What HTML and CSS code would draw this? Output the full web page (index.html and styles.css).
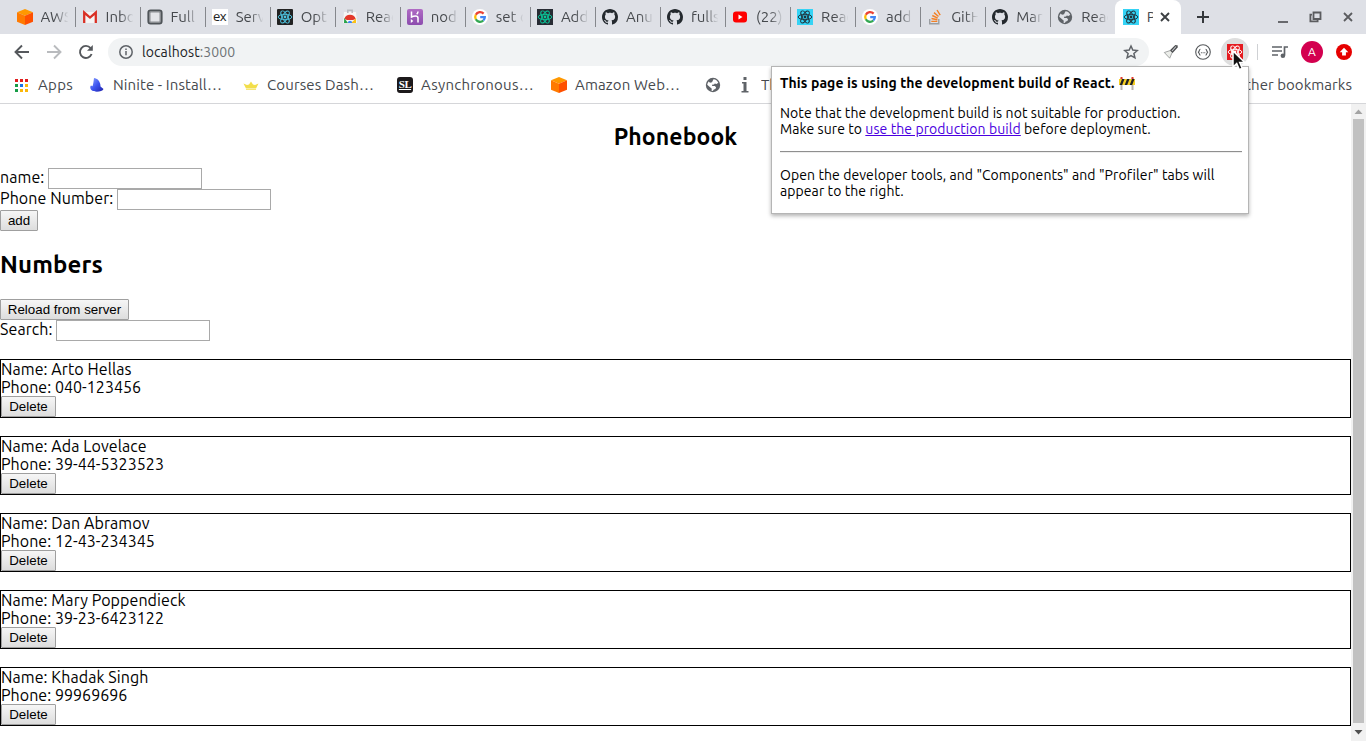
FILE: index.html
```
<!DOCTYPE html>
<html lang="en">
<head>
<meta charset="utf-8">
<title>Phonebook</title>
<link rel="stylesheet" href="styles.css">
</head>
<body>
<svg class="defs" width="0" height="0" aria-hidden="true">
  <defs>
    <linearGradient id="ninite" x1="0" y1="0" x2="1" y2="1"><stop offset="0" stop-color="#8fa5ff"/><stop offset=".5" stop-color="#3d55f0"/><stop offset="1" stop-color="#2020a8"/></linearGradient>
    <linearGradient id="heroku" x1="0" y1="0" x2="0" y2="1"><stop offset="0" stop-color="#b06bc4"/><stop offset="1" stop-color="#8c4cae"/></linearGradient>
    <symbol id="box" viewBox="0 0 16 16"><path fill="#ff9800" d="M8 0l8 3.2L8 6.8 0 3.2z"/><path fill="#ff7a00" d="M0 3.2l8 3.6V16l-8-3.2z"/><path fill="#ff5000" d="M16 3.2L8 6.8V16l8-3.2z"/></symbol>
    <symbol id="atom" viewBox="0 0 16 16"><g fill="none" stroke="currentColor" stroke-width=".95"><ellipse cx="8" cy="8" rx="6.8" ry="2.7"/><ellipse cx="8" cy="8" rx="6.8" ry="2.7" transform="rotate(60 8 8)"/><ellipse cx="8" cy="8" rx="6.8" ry="2.7" transform="rotate(120 8 8)"/></g><circle cx="8" cy="8" r="1.4" fill="currentColor"/></symbol>
    <symbol id="github" viewBox="0 0 16 16"><path fill="#24292e" d="M8 0C3.58 0 0 3.58 0 8c0 3.54 2.29 6.53 5.47 7.59.4.07.55-.17.55-.38 0-.19-.01-.82-.01-1.49-2.01.37-2.53-.49-2.69-.94-.09-.23-.48-.94-.82-1.13-.28-.15-.68-.52-.01-.53.63-.01 1.08.58 1.23.82.72 1.21 1.87.87 2.33.66.07-.52.28-.87.51-1.07-1.78-.2-3.64-.89-3.64-3.95 0-.87.31-1.59.82-2.15-.08-.2-.36-1.02.08-2.12 0 0 .67-.21 2.2.82.64-.18 1.32-.27 2-.27s1.36.09 2 .27c1.53-1.04 2.2-.82 2.2-.82.44 1.1.16 1.92.08 2.12.51.56.82 1.27.82 2.15 0 3.07-1.87 3.75-3.65 3.95.29.25.54.73.54 1.48 0 1.07-.01 1.93-.01 2.2 0 .21.15.46.55.38A8.01 8.01 0 0016 8c0-4.42-3.58-8-8-8z"/></symbol>
    <symbol id="google" viewBox="0 0 16 16"><circle cx="8" cy="8" r="8" fill="#fff"/><g fill="none" stroke-width="2.3"><path stroke="#ea4335" d="M11.6 4.6A4.8 4.8 0 0 0 3.8 5.7"/><path stroke="#fbbc05" d="M3.8 5.7a4.8 4.8 0 0 0 0 4.6"/><path stroke="#34a853" d="M3.8 10.3a4.8 4.8 0 0 0 7.5 1.2"/><path stroke="#4285f4" d="M11.3 11.5A4.8 4.8 0 0 0 12.8 8.2H8.2"/></g></symbol>
    <symbol id="globe" viewBox="0 0 16 16"><circle cx="8" cy="8" r="7.2" fill="#5f6368"/><path fill="currentColor" d="M8.500 2.300c2.200.2 4 1.600 4.800 3.500L11.500 7 9.800 6.500 9 7.500l-2 .2.200 1.200 2.600.1 1.300 1.300-.7 1.700-1.600.5-1 1.400-1.300-.2.300-2L4.800 10 2.200 7.800c.2-1.200.7-2.300 1.500-3.200L5 5.800l2-.5z"/></symbol>
  </defs>
</svg>

<header class="browser">
  <div class="tabstrip">
    <div class="tab"><svg class="fav"><use href="#box"/></svg><span class="tab-title">AWS</span></div>
    <div class="tab"><svg class="fav" viewBox="0 0 16 16"><path fill="#f4f4f4" d="M1 3h14v11H1z"/><path fill="none" stroke="#d93025" stroke-width="2.300" d="M2.200 14V3.600L8 8.600l5.800-5V14"/></svg><span class="tab-title">Inbox</span></div>
    <div class="tab"><svg class="fav" viewBox="0 0 16 16"><rect x="1.200" y="1.200" width="13.600" height="13.600" rx="2.500" fill="#8b8e92" stroke="#4f5458" stroke-width="1.600"/><rect x="3.500" y="3.500" width="9" height="9" rx=".5" fill="#e3e4e8"/></svg><span class="tab-title">Full</span></div>
    <div class="tab"><span class="fav fav-ex">ex</span><span class="tab-title">Serv</span></div>
    <div class="tab"><svg class="fav fav-dark"><use href="#atom"/></svg><span class="tab-title">Opti</span></div>
    <div class="tab"><svg class="fav" viewBox="0 0 16 16"><path fill="#f6f6f6" d="M2 3h12l1 11H1z"/><path fill="none" stroke="#b8bbc0" stroke-width="1.500" d="M5.800 4V1.200h4.400V4"/><path fill="#e3392b" d="M2.300 10A6 6 0 0 1 13.700 10L11 11H5z"/><path fill="#28a34a" d="M2.200 9l3.800 5H2z"/><path fill="#fbc116" d="M14 9.500V14H9z"/><path fill="#4285f4" d="M5.800 14a2.200 2.200 0 0 1 4.400 0z"/></svg><span class="tab-title">Reac</span></div>
    <div class="tab"><svg class="fav" viewBox="0 0 16 16"><rect width="16" height="16" rx="2" fill="url(#heroku)"/><path fill="none" stroke="#fff" stroke-width="1.500" d="M4.500 2.500V8c2-1 6.500-2 6.500 1v4.500M11 2.500c0 1.200-.5 2-1.300 2.800"/><path fill="#fff" d="M3.800 10l2.500 2-2.500 2z"/></svg><span class="tab-title">node</span></div>
    <div class="tab"><svg class="fav"><use href="#google"/></svg><span class="tab-title">set c</span></div>
    <div class="tab"><svg class="fav fav-green"><use href="#atom"/></svg><span class="tab-title">Add</span></div>
    <div class="tab"><svg class="fav"><use href="#github"/></svg><span class="tab-title">Anur</span></div>
    <div class="tab"><svg class="fav"><use href="#github"/></svg><span class="tab-title">fulls</span></div>
    <div class="tab"><svg class="fav" viewBox="0 0 16 16"><rect x="1" y="2.500" width="14" height="11" rx="3" fill="#f00"/><path fill="#fff" d="M6.500 5.600L10.500 8l-4 2.400z"/></svg><span class="tab-title">(22)</span></div>
    <div class="tab"><svg class="fav fav-cyan"><use href="#atom"/></svg><span class="tab-title">Reac</span></div>
    <div class="tab"><svg class="fav"><use href="#google"/></svg><span class="tab-title">add</span></div>
    <div class="tab"><svg class="fav" viewBox="0 0 16 16"><path fill="none" stroke="#9a9da1" stroke-width="1.400" d="M2.700 10v4.800h9.100V10"/><path fill="none" stroke="#f48024" stroke-width="1.400" d="M4.300 12.400h6M4.500 9.500l5.900 1.200M5.300 6.500l5.400 2.600M7 3.600l4.500 3.900M10 1l3.200 5.200"/></svg><span class="tab-title">GitH</span></div>
    <div class="tab"><svg class="fav"><use href="#github"/></svg><span class="tab-title">Mar</span></div>
    <div class="tab tab-last"><svg class="fav fav-globe"><use href="#globe"/></svg><span class="tab-title">Reac</span></div>
    <div class="tab-active">
      <svg class="fav fav-cyan"><use href="#atom"/></svg><span class="active-title">P</span>
      <svg class="close" viewBox="0 0 10 10"><path d="M1 1l8 8M9 1L1 9"/></svg>
    </div>
    <svg class="newtab" viewBox="0 0 12 12"><path d="M6 0v12M0 6h12"/></svg>
    <svg class="winbtns" viewBox="0 0 76 14"><g fill="none" stroke="#5b5c5f" stroke-width="1.800"><path d="M0 12h10"/><path d="M35.500 2.500h7v6.500h-7z"/><path d="M34 4.700h-1.600v6.600h7.200V10"/><path d="M66 3l8 8M74 3l-8 8"/></g></svg>
  </div>

  <div class="toolbar">
    <svg class="nav" viewBox="0 0 16 16"><path d="M15 8H2M8 1.500L1.500 8 8 14.500"/></svg>
    <svg class="nav nav-off" viewBox="0 0 16 16"><path d="M1 8h13M8 1.500L14.500 8 8 14.500"/></svg>
    <svg class="nav" viewBox="0 0 16 16"><path d="M13.600 10A6 6 0 1 1 12.600 4.100"/><path class="solid" d="M14.800 1v5.800H9z"/></svg>
    <div class="omnibox">
      <svg class="info" viewBox="0 0 14 14"><circle cx="7" cy="7" r="6.200"/><path d="M7 6v4.300M7 3.400v1.500"/></svg>
      <span class="url">localhost<span class="port">:3000</span></span>
      <svg class="star" viewBox="0 0 16 16"><path d="M8 2l1.800 4.100 4.500.4-3.400 3 1 4.300L8 11.500l-3.900 2.300 1-4.300-3.400-3 4.500-.4z"/></svg>
    </div>
    <svg class="ext ext-brush" viewBox="0 0 16 16"><path fill="#eceeea" stroke="#8d8f8f" stroke-width=".8" d="M1.300 8.500l6-2 1.900 2-2.500 5.700z"/><path fill="#4a4c4e" d="M7 6.300L12.300 1l2.500.6-.2 1.800L9.600 9z"/><path stroke="#c9cccf" stroke-width="1.100" d="M9 7l4-4.500"/></svg>
    <svg class="ext ext-json" viewBox="0 0 18 18"><circle cx="9" cy="9" r="7.300"/><path d="M6.400 6.200C4.600 6.200 6.200 8.700 4 9.200c2.200.5.600 2.900 2.400 2.900M11.600 6.200c1.800 0 .2 2.500 2.400 3-2.200.5-.6 2.900-2.400 2.900"/><path stroke-dasharray="1 .7" d="M6.900 9.700h4.400"/></svg>
    <div class="ext-react">
      <svg class="react" viewBox="0 0 16 16"><path fill="#e51c20" d="M0 0h16v16H0z"/><g class="react-atom"><use href="#atom"/></g></svg>
      <svg class="cursor" viewBox="0 0 14 21"><path d="M1 1v16l3.700-3.400 2.600 6 2.900-1.300-2.500-5.700H13z"/></svg>
    </div>
    <span class="divider"></span>
    <svg class="playlist" viewBox="0 0 16 14"><path fill="none" stroke="#5f6368" stroke-width="1.700" d="M0 2h10M0 6h10M0 10h6M12.500 10.500V2H16"/><circle cx="10.900" cy="10.800" r="2.300" fill="#5f6368"/></svg>
    <span class="avatar">A</span>
    <svg class="update" viewBox="0 0 16 16"><circle cx="8" cy="8" r="8" fill="#e60000"/><path fill="#fff" d="M8 3.700L12.300 8.300H9.900v3.200H6.100V8.300H3.700z"/></svg>
  </div>

  <nav class="bookmarks">
    <span class="bm bm-apps"><svg class="apps" viewBox="0 0 13 13"><path fill="#e01e1e" d="M0 0h3v3H0zM5 0h3v3H5zM10 0h3v3h-3z"/><path fill="#169c46" d="M0 5h3v3H0zM0 10h3v3H0z"/><path fill="#1a73e8" d="M5 5h3v3H5z"/><path fill="#fbb70b" d="M10 5h3v3h-3zM5 10h3v3H5zM10 10h3v3h-3z"/></svg>Apps</span>
    <span class="bm bm-ninite"><svg class="fav" viewBox="0 0 16 16"><path fill="url(#ninite)" d="M5 1c3 .3 6.500 3 6.500 8.500L14.500 12c-1 3-9 3.500-11.500 1.500C1.500 12.500.5 10 2 8.500l1.500.8C4.500 6.500 4.500 4 5 1z"/></svg>Ninite - Install…</span>
    <span class="bm bm-courses"><svg class="fav" viewBox="0 0 16 16"><path fill="#f2de4a" d="M.5 6.500L4 8l2-.5L8 4.500l2 3 2 .5 3.500-1.500L13 11.500H3zM3 12.300h10V13H3z"/></svg>Courses Dash…</span>
    <span class="bm bm-async"><span class="fav fav-sl">SL</span>Asynchronous…</span>
    <span class="bm bm-amazon"><svg class="fav"><use href="#box"/></svg>Amazon Web…</span>
    <span class="bm bm-globe"><svg class="fav fav-globe-white"><use href="#globe"/></svg></span>
    <span class="bm bm-info"><svg class="glyph-i" viewBox="0 0 8 16"><path fill="#5f6368" d="M2.500 0h3v3h-3zM1 5h4.500v9H7.500v1.600H.5V14h2V6.600H1z"/></svg><span class="cut">Th</span></span>
    <span class="bm-other">Other bookmarks</span>
  </nav>
</header>

<div class="viewport">
  <main class="page">
    <h2 class="title">Phonebook</h2>
    <form class="form">
      <div class="row"><label class="lb-name">name:</label><input class="field" aria-label="name"></div>
      <div class="row"><label class="lb-phone">Phone Number:</label><input class="field" aria-label="phone"></div>
      <div class="row"><button type="button" class="btn btn-add">add</button></div>
    </form>
    <h2 class="subtitle">Numbers</h2>
    <div class="row"><button class="btn btn-reload">Reload from server</button></div>
    <div class="row"><label class="lb-search">Search:</label><input class="field" aria-label="search"></div>
    <div class="people">
      <div class="person"><span>Name: Arto Hellas</span><span class="num">Phone: 040-123456</span><button class="btn btn-del">Delete</button></div>
      <div class="person"><span>Name: Ada Lovelace</span><span class="num">Phone: 39-44-5323523</span><button class="btn btn-del">Delete</button></div>
      <div class="person"><span>Name: Dan Abramov</span><span class="num">Phone: 12-43-234345</span><button class="btn btn-del">Delete</button></div>
      <div class="person"><span>Name: Mary Poppendieck</span><span class="num">Phone: 39-23-6423122</span><button class="btn btn-del">Delete</button></div>
      <div class="person"><span>Name: Khadak Singh</span><span class="num">Phone: 99969696</span><button class="btn btn-del">Delete</button></div>
    </div>
  </main>
  <div class="scrollbar">
    <svg class="arrow" viewBox="0 0 15 15"><path fill="#a3a3a3" d="M7.500 5.500L11.500 10h-8z"/></svg>
    <div class="thumb"></div>
    <svg class="arrow arrow-down" viewBox="0 0 15 15"><path fill="#505050" d="M3.500 5h8l-4 4.500z"/></svg>
  </div>
</div>

<aside class="popup">
  <p class="p-title"><b>This page is using the development build of React.</b><svg class="barrier" viewBox="0 0 16 13"><path fill="#b9b4b0" d="M1.500 1h2v12h-2zM12.500 1h2v12h-2z"/><path fill="#f7cf22" d="M0 2h16v6H0z"/><path fill="#222" d="M3 2h2.500L3.200 8H.7zM8 2h2.500L8.200 8H5.700zM13 2h2.500l-2.300 6h-2.500z"/><path fill="#e03a2c" d="M1.500 0h2v2h-2zM12.500 0h2v2h-2z"/></svg></p>
  <p class="p-note">Note that the development build is not suitable for production.<br>Make sure to <a href="#">use the production build</a> before deployment.</p>
  <div class="rule"></div>
  <p class="p-open">Open the developer tools, and "Components" and "Profiler" tabs will<br>appear to the right.</p>
</aside>
</body>
</html>
```
FILE: styles.css
```
* { box-sizing: border-box; }
html, body { height: 100%; }
body { margin: 0; display: flex; flex-direction: column; overflow: hidden; background: #fff; color: #000; font-family: Ubuntu, "Noto Sans", "Open Sans", sans-serif; font-size: 16px; }
p, h2 { margin: 0; }
svg { display: block; flex: none; }
.defs { position: absolute; }

/* Browser frame */
.browser { height: 104px; flex: none; border-bottom: 1px solid #d5d6d9; color: #46494d; font-size: 15px; }
.tabstrip { display: flex; height: 34px; background: #dee0e6; padding-left: 10px; }
.tab { display: flex; align-items: center; width: 65.06px; flex: none; padding-left: 6.500px; position: relative; }
.tab::after { content: ""; position: absolute; right: -.5px; top: 7px; width: 1px; height: 20px; background: #85878c; }
.tab-last::after { display: none; }
.fav { width: 16px; height: 16px; flex: none; }
.tab-title { margin-left: 8px; width: 28px; overflow: hidden; white-space: nowrap; line-height: 20px; -webkit-mask-image: linear-gradient(90deg, #000 50%, transparent 98%); mask-image: linear-gradient(90deg, #000 50%, transparent 98%); }
.fav-ex { background: #fff; color: #222; font: 13px/15px "Open Sans", sans-serif; text-align: center; letter-spacing: -.3px; }
.fav-dark { background: #222; color: #4dc4e0; border-radius: 1px; }
.fav-green { background: #282c34; color: #08c79a; }
.fav-cyan { background: #35d3f5; color: #20333c; }
.fav-globe { color: #dee0e6; }
.fav-globe-white { color: #fff; }
.tab-active { display: flex; align-items: center; width: 66px; margin-left: -1px; padding-left: 8px; background: #fff; border-radius: 8px 8px 0 0; flex: none; }
.active-title { width: 6px; margin-left: 8px; overflow: hidden; line-height: 20px; }
.close { width: 10px; height: 10px; margin-left: 7px; }
.close path { stroke: #3c4043; stroke-width: 1.900; }
.newtab { width: 12px; height: 12px; margin: 11px 0 0 16px; }
.newtab path { stroke: #35383c; stroke-width: 2; }
.winbtns { width: 76px; height: 14px; margin: 10px 12px 0 auto; }

.toolbar { display: flex; align-items: center; height: 36px; padding-left: 14px; }
.nav { width: 16px; height: 16px; margin-right: 16px; fill: none; stroke: #55585c; stroke-width: 1.900; }
.nav .solid { fill: #55585c; stroke: none; }
.nav-off { stroke: #b9bbbe; }
.omnibox { display: flex; align-items: center; width: 1041px; height: 28px; margin-left: -2px; padding-left: 11px; border-radius: 14px; background: #f1f3f4; flex: none; }
.info { width: 14px; height: 14px; fill: none; stroke: #5f6368; stroke-width: 1.500; }
.url { margin-left: 9px; color: #202124; font-size: 14px; letter-spacing: .09px; }
.port { color: #6f7377; }
.star { width: 16px; height: 16px; margin: 0 10px 0 auto; fill: none; stroke: #5f6368; stroke-width: 1.500; }
.ext-brush { width: 16px; height: 16px; margin-left: 14px; }
.ext-json { width: 18px; height: 18px; margin-left: 15px; fill: none; stroke: #56595c; stroke-width: 1.100; }
.ext-react { position: relative; display: flex; align-items: center; justify-content: center; width: 28px; height: 28px; margin-left: 9px; border-radius: 14px; background: #dedede; }
.react { width: 16px; height: 16px; }
.react-atom { color: #fff; }
.cursor { position: absolute; left: 11px; top: 12px; width: 14px; height: 21px; z-index: 5; fill: #111; stroke: #fff; stroke-width: 1.500; }
.divider { width: 1px; height: 16px; margin-left: 8px; background: #cfd1d4; }
.playlist { width: 16px; height: 14px; margin-left: 14px; }
.avatar { width: 22px; height: 22px; margin-left: 13px; border-radius: 11px; background: #d3004f; color: #fff; font-size: 12px; line-height: 22px; text-align: center; }
.update { width: 16px; height: 16px; margin-left: 13px; }

.bookmarks { display: flex; align-items: center; height: 33px; padding-left: 15px; padding-bottom: 3px; }
.bm { display: flex; align-items: center; gap: 8px; flex: none; white-space: nowrap; line-height: 20px; }
.bm-apps { width: 74px; gap: 10px; letter-spacing: .3px; }
.apps { width: 13px; height: 13px; }
.bm-ninite { width: 154px; letter-spacing: .1px; }
.bm-courses { width: 154px; letter-spacing: .13px; }
.bm-async { width: 154px; letter-spacing: .25px; }
.bm-amazon { width: 154px; letter-spacing: .15px; }
.bm-globe { width: 36px; }
.bm-info { width: 60px; gap: 12px; }
.cut { width: 11px; overflow: hidden; }
.glyph-i { width: 8px; height: 16px; }
.bm-other { margin-left: auto; margin-right: 14px; white-space: nowrap; line-height: 20px; padding-bottom: 1px; letter-spacing: .05px; }
.fav-sl { border-radius: 3px; background: #1c191b; color: #fff; font: bold 11px/14px "Liberation Serif", serif; text-align: center; text-decoration: underline; letter-spacing: -.6px; }

/* Page */
.viewport { display: flex; flex: 1; min-height: 0; }
.page { flex: 1; padding-top: 19px; letter-spacing: .08px; }
.title { height: 28px; line-height: 28px; font-size: 23px; text-align: center; }
.form { margin-top: 17px; }
.row { display: flex; height: 21px; }
.row label { line-height: 19px; white-space: nowrap; }
.lb-name { width: 48px; }
.lb-phone { width: 117px; }
.lb-search { width: 56px; }
.field { width: 154px; height: 21px; margin: 0; padding: 1px; border: 1px solid #a9a9a9; background: #fff; }
.btn { height: 21px; margin: 0; padding: 0; border: 1px solid #9f9f9f; border-radius: 1px; background: linear-gradient(#f6f6f6, #dddddd); color: #000; font: 13.333px "Liberation Sans", Arial, sans-serif; letter-spacing: 0; }
.btn-add { width: 38px; }
.btn-reload { width: 129px; }
.btn-del { width: 55px; }
.subtitle { height: 28px; margin: 20px 0; line-height: 28px; font-size: 24px; letter-spacing: .15px; }
.people { display: flex; flex-direction: column; gap: 18px; margin-top: 18px; }
.person { display: flex; flex-direction: column; align-items: flex-start; height: 59px; border: 1px solid #000; line-height: 18px; white-space: nowrap; }
.num { letter-spacing: .04px; }
.scrollbar { display: flex; flex-direction: column; align-items: center; width: 15px; background: #f1f1f1; }
.arrow { width: 15px; height: 15px; }
.thumb { width: 11px; height: 604px; background: #c1c1c1; }
.arrow-down { margin-top: 2px; }

/* Extension popup */
.popup { position: absolute; left: 771px; top: 66px; width: 478px; height: 148px; padding: 8px 6px 0 8px; border: 1px solid #b5b5b5; background: #fff; box-shadow: 0 2px 4px rgba(0,0,0,.3); font-size: 14px; line-height: 16px; white-space: nowrap; letter-spacing: .08px; }
.p-title { display: flex; gap: 4px; margin-bottom: 14px; letter-spacing: .1px; }
.barrier { width: 16px; height: 13px; margin-top: 2px; }
.popup a { color: #4a00e0; }
.rule { margin: 14px 0; height: 2px; border-top: 1px solid #8f8f8f; border-bottom: 1px solid #eee; }
```
